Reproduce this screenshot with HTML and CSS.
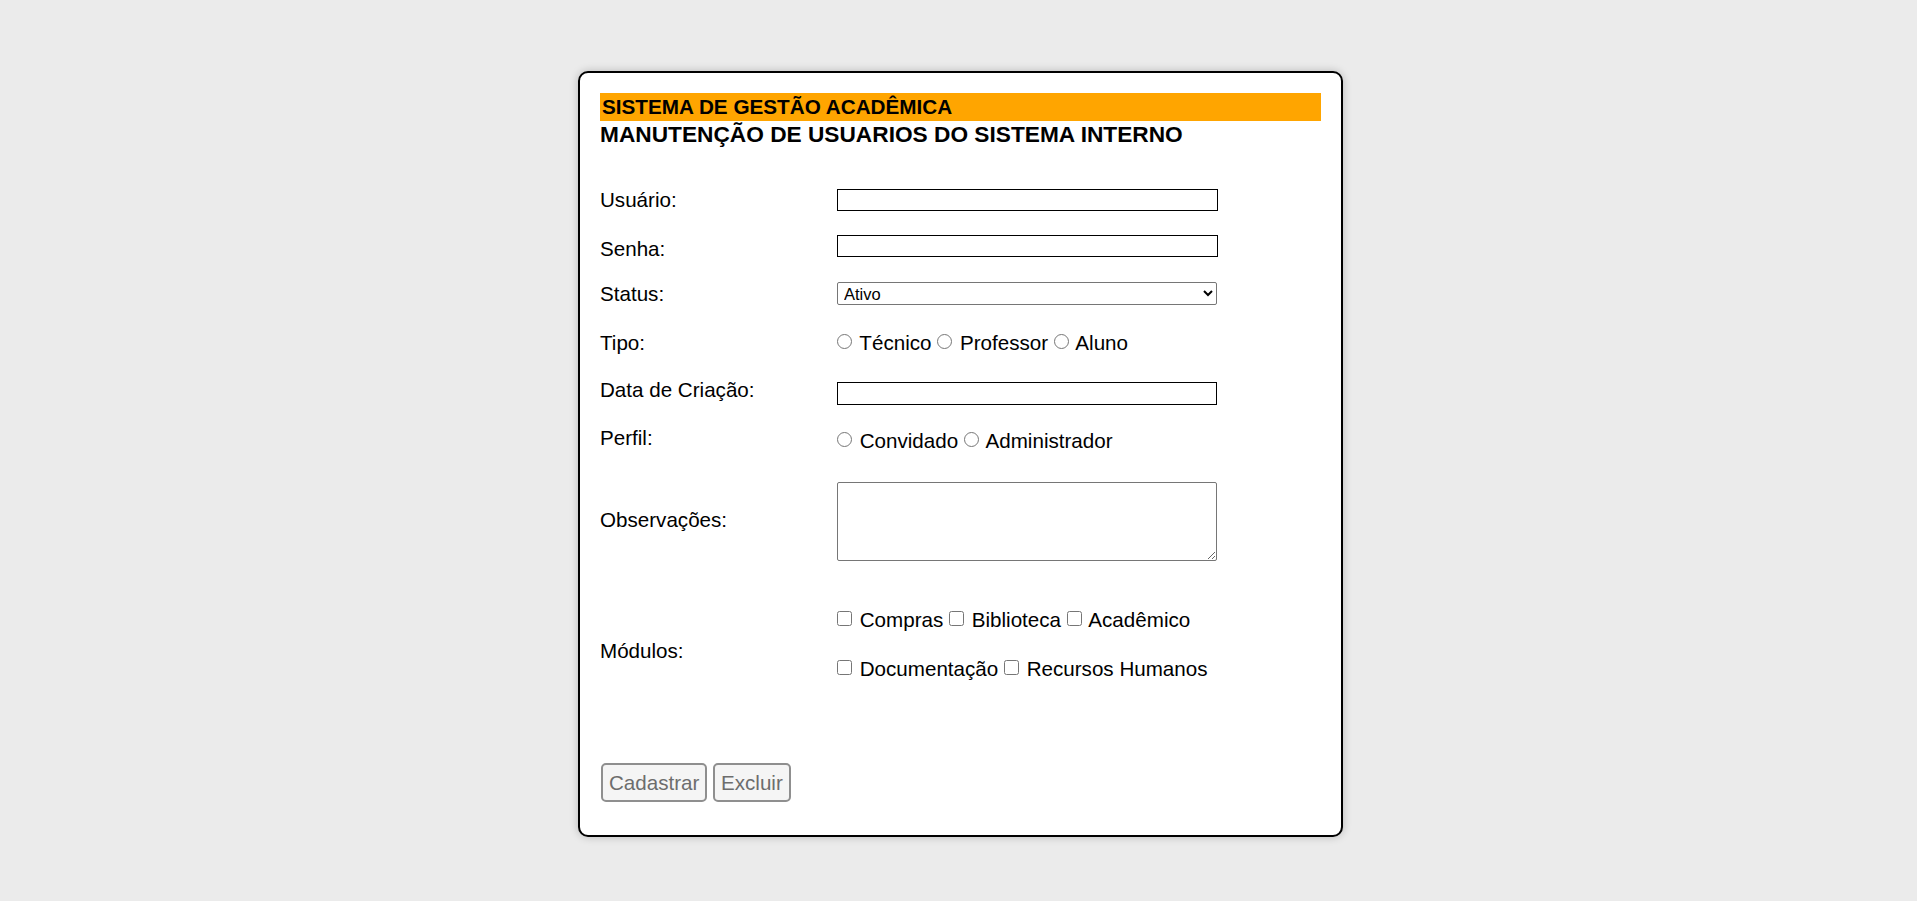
FILE: index.html
```html
<!DOCTYPE html>
<html lang="pt-BR">
<head>
<meta charset="utf-8">
<title>Sistema de Gestão Acadêmica</title>
<link rel="stylesheet" href="styles.css">
</head>
<body>
<main class="card">
  <h1 class="title">SISTEMA DE GESTÃO ACADÊMICA</h1>
  <h2 class="subtitle">MANUTENÇÃO DE USUARIOS DO SISTEMA INTERNO</h2>
  <form class="form">
    <div class="field field-usuario">
      <label class="label" for="usuario">Usuário:</label>
      <input class="text-input" id="usuario" type="text">
    </div>
    <div class="field field-senha">
      <label class="label label-senha" for="senha">Senha:</label>
      <input class="text-input" id="senha" type="password">
    </div>
    <div class="field field-status">
      <label class="label" for="status">Status:</label>
      <select class="select" id="status">
        <option>Ativo</option>
        <option>Inativo</option>
      </select>
    </div>
    <div class="field field-tipo">
      <span class="label">Tipo:</span>
      <div class="choices"><input class="radio" type="radio" name="tipo"> Técnico <input class="radio" type="radio" name="tipo"> Professor <input class="radio" type="radio" name="tipo"> Aluno</div>
    </div>
    <div class="field field-data">
      <label class="label" for="data">Data de Criação:</label>
      <input class="text-input date-input" id="data" type="text">
    </div>
    <div class="field field-perfil">
      <span class="label">Perfil:</span>
      <div class="choices choices-perfil"><input class="radio" type="radio" name="perfil"> Convidado <input class="radio" type="radio" name="perfil"> Administrador</div>
    </div>
    <div class="field field-obs">
      <label class="label label-obs" for="obs">Observações:</label>
      <textarea class="textarea" id="obs"></textarea>
    </div>
    <div class="field field-modulos">
      <span class="label label-modulos">Módulos:</span>
      <div class="modules">
        <div class="choices"><input class="check" type="checkbox"> Compras <input class="check" type="checkbox"> Biblioteca <input class="check" type="checkbox"> Acadêmico</div>
        <div class="choices"><input class="check" type="checkbox"> Documentação <input class="check" type="checkbox"> Recursos Humanos</div>
      </div>
    </div>
    <div class="actions">
      <button class="btn" type="button" disabled>Cadastrar</button> <button class="btn" type="button" disabled>Excluir</button>
    </div>
  </form>
</main>
</body>
</html>
```
FILE: styles.css
```css
html, body {
  margin: 0;
  padding: 0;
}
body {
  background: #ebebeb;
  font-family: "Liberation Sans", Arial, sans-serif;
  color: #000;
  display: flex;
  justify-content: center;
  align-items: flex-start;
  min-height: 901px;
  padding-left: 4px;
  box-sizing: border-box;
}
.card {
  margin-top: 71px;
  width: 765px;
  height: 766px;
  box-sizing: border-box;
  background: #fff;
  border: 2px solid #000;
  border-radius: 10px;
  box-shadow: 0 0 9px rgba(0, 0, 0, 0.22);
  padding: 20px;
}
.title {
  margin: 0;
  background: #ffa500;
  font-size: 20.7px;
  font-weight: bold;
  line-height: 23px;
  padding: 2px 2px 3px 2px;
}
.subtitle {
  margin: 0;
  font-size: 22.7px;
  font-weight: bold;
  line-height: 26px;
}
.form {
  margin: 0;
}
.field {
  display: grid;
  grid-template-columns: 237px 1fr;
  align-items: center;
}
.label {
  font-size: 20.6px;
  line-height: 23px;
}
.label-senha {
  margin-top: 3px;
  margin-bottom: -3px;
}
.field-usuario { margin-top: 41px; }
.field-senha { margin-top: 23px; }
.field-status { margin-top: 25px; }
.field-tipo { margin-top: 26px; }
.field-data { margin-top: 24px; align-items: start; }
.field-perfil { margin-top: 21px; align-items: start; }
.field-obs { margin-top: 30px; }
.field-modulos { margin-top: 47px; align-items: start; }

.text-input {
  width: 381px;
  height: 22px;
  box-sizing: border-box;
  border: 1px solid #000;
  border-radius: 0;
  padding: 0 4px;
  margin: 0;
  font-family: inherit;
  font-size: 16px;
  outline: none;
}
.date-input {
  width: 380px;
  height: 23px;
  margin-top: 4px;
}
.select {
  width: 380px;
  height: 23px;
  box-sizing: border-box;
  margin: 0;
  border: 1px solid #767676;
  border-radius: 2px;
  padding: 0 2px;
  background: #fff;
  color: #000;
  font-family: inherit;
  font-size: 16.5px;
}
.choices {
  font-size: 20.6px;
  line-height: 23px;
  white-space: nowrap;
}
.choices-perfil {
  margin-top: 3px;
}
.radio, .check {
  width: 15px;
  height: 15px;
  margin: 0 2px 0 0;
  vertical-align: 1px;
}
.textarea {
  width: 380px;
  height: 79px;
  box-sizing: border-box;
  margin: 0;
  border: 1px solid #767676;
  border-radius: 2px;
  padding: 2px;
  font-family: inherit;
  font-size: 16px;
  display: block;
}
.label-obs {
  margin-bottom: 5px;
}
.modules {
  display: flex;
  flex-direction: column;
  gap: 26px;
}
.label-modulos {
  margin-top: 31px;
}
.actions {
  margin-top: 83px;
  padding-left: 1px;
  font-size: 20px;
}
.btn {
  font-family: inherit;
  font-size: 20.6px;
  line-height: 23px;
  height: 39px;
  padding: 6px 6px;
  margin: 0;
  border: 2px solid #8f8f8f;
  border-radius: 5px;
  background: #f5f5f5;
  color: #6d6d6d;
  vertical-align: top;
}
```
